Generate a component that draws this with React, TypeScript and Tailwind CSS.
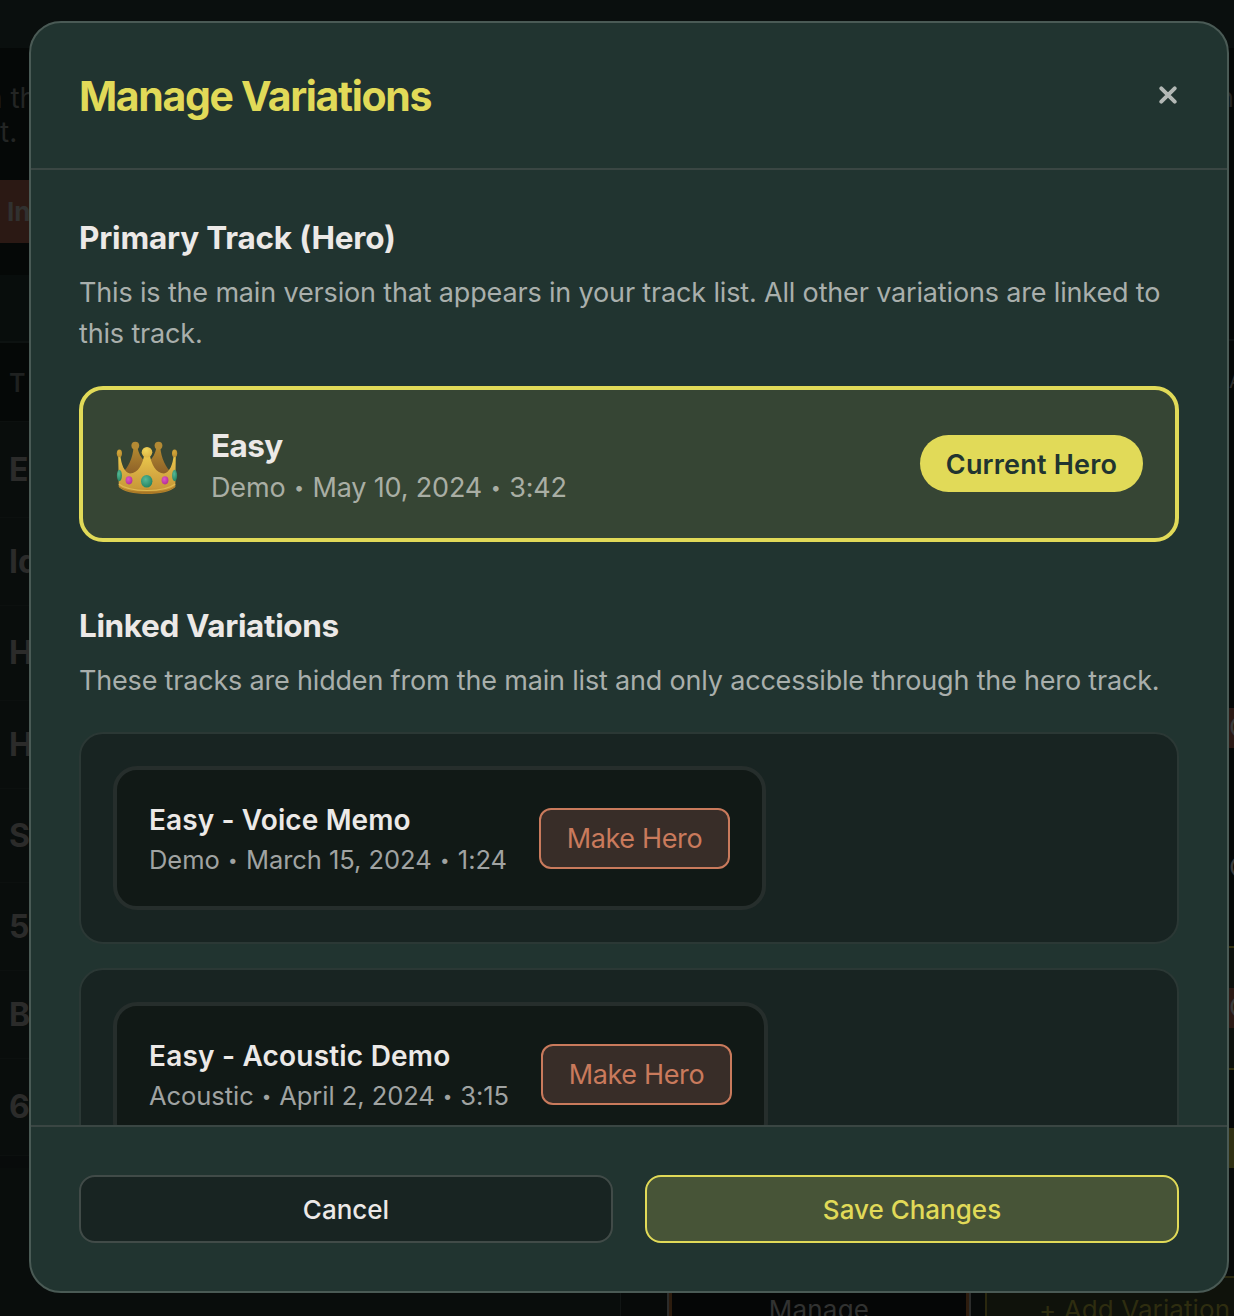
import React from 'react';

type Variation = {
  title: string;
  meta: string[];
  metaWidth: string;
  titleTracking: string;
};

const variations: Variation[] = [
  {
    title: 'Easy - Voice Memo',
    meta: ['Demo', 'March 15, 2024', '1:24'],
    metaWidth: 'w-[358px]',
    titleTracking: 'tracking-[0.12px]',
  },
  {
    title: 'Easy - Acoustic Demo',
    meta: ['Acoustic', 'April 2, 2024', '3:15'],
    metaWidth: 'w-[360px]',
    titleTracking: 'tracking-[0.2px]',
  },
];

const leftRows = [
  { label: 'E', height: 'h-[96px]' },
  { label: 'Id', height: 'h-[88px]' },
  { label: 'H', height: 'h-[95px]' },
  { label: 'H', height: 'h-[88px]' },
  { label: 'S', height: 'h-[94px]' },
  { label: '5', height: 'h-[88px]' },
  { label: 'B', height: 'h-[88px]' },
  { label: '6', height: 'h-[97px]' },
];

function Meta({ parts, dot }: { parts: string[]; dot: string }) {
  return (
    <span className="flex whitespace-pre">
      {parts.map((part, i) => (
        <React.Fragment key={part}>
          {i > 0 && <span className={dot}>•</span>}
          <span>{part}</span>
        </React.Fragment>
      ))}
    </span>
  );
}

function Crown() {
  return (
    <svg viewBox="0 0 64 56" className="h-[56px] w-[64px] shrink-0">
      <defs>
        <linearGradient id="front" x1="0" y1="0" x2="0" y2="1">
          <stop offset="0" stopColor="#ecca4c" />
          <stop offset="0.5" stopColor="#d6aa42" />
          <stop offset="0.85" stopColor="#c99a38" />
          <stop offset="1" stopColor="#a87624" />
        </linearGradient>
        <linearGradient id="back" x1="0" y1="0" x2="0" y2="1">
          <stop offset="0" stopColor="#b48a30" />
          <stop offset="1" stopColor="#8a5d28" />
        </linearGradient>
        <radialGradient id="ball" cx="0.4" cy="0.3" r="0.8">
          <stop offset="0" stopColor="#f0d65a" />
          <stop offset="1" stopColor="#d9ae40" />
        </radialGradient>
        <radialGradient id="sideBall" cx="0.4" cy="0.3" r="0.8">
          <stop offset="0" stopColor="#d4a83a" />
          <stop offset="1" stopColor="#b68a2e" />
        </radialGradient>
        <radialGradient id="green" cx="0.4" cy="0.35" r="0.7">
          <stop offset="0" stopColor="#56b996" />
          <stop offset="1" stopColor="#22805f" />
        </radialGradient>
        <radialGradient id="pink" cx="0.4" cy="0.35" r="0.7">
          <stop offset="0" stopColor="#dc58c4" />
          <stop offset="1" stopColor="#b32c94" />
        </radialGradient>
      </defs>
      <path d="M7 33 C13 28 18 18 18.500 7 L22.300 7 C23.500 13 26 18 30 21 L24 36 H14 Z" fill="url(#back)" />
      <path d="M57 33 C51 28 46 18 45.300 7 L41.500 7 C40.500 13 38 18 34 21 L40 36 H50 Z" fill="url(#back)" />
      <circle cx="20.300" cy="5.600" r="3.900" fill="#b38a34" />
      <circle cx="43.500" cy="5.600" r="3.900" fill="#b38a34" />
      <path d="M3.200 15 H5.200 C6.500 25 9 32 15 33.500 C23 33.500 28 24 29.300 14 H34.700 C36 24 41 33.500 49 33.500 C55 32 57.500 25 58.800 15 H60.800 L60.300 47 C56 51.500 45 54 32 54 C19 54 8 51.500 3.800 47 Z" fill="url(#front)" />
      <path d="M3.800 44 C10 49 20 50.500 32 50.500 C44 50.500 54 49 60.200 44" fill="none" stroke="#dfb950" strokeWidth="1.200" />
      <path d="M4.200 46.500 C11 51.500 20 52.500 32 52.500 C44 52.500 53 51.500 59.800 46.500" fill="none" stroke="#a47424" strokeWidth="0.800" />
      <ellipse cx="4.400" cy="13.300" rx="2.600" ry="3.900" fill="url(#sideBall)" />
      <ellipse cx="59.600" cy="13.300" rx="2.600" ry="3.900" fill="url(#sideBall)" />
      <circle cx="32" cy="12.300" r="5.300" fill="url(#ball)" />
      <ellipse cx="4.400" cy="35.500" rx="2.500" ry="5.700" fill="url(#green)" />
      <ellipse cx="59.600" cy="35.500" rx="2.500" ry="5.700" fill="url(#green)" />
      <ellipse cx="14" cy="40.300" rx="3.400" ry="4.100" fill="url(#pink)" />
      <ellipse cx="50" cy="40.300" rx="3.400" ry="4.100" fill="url(#pink)" />
      <ellipse cx="31.700" cy="41.300" rx="5.700" ry="6.300" fill="url(#green)" />
    </svg>
  );
}

function PageBehind() {
  return (
    <div className="flex h-[1316px] flex-col bg-[#050807]">
      <div className="h-12 shrink-0 bg-[#0a0f0e]" />
      <div className="flex h-[1120px] shrink-0 justify-between">
        <div className="flex w-1/2 flex-col whitespace-nowrap">
          <div className="flex h-[132px] flex-col items-start pt-[33px] text-[28px] leading-[34px] text-[#232524]">
            <div className="-ml-[14px]">n th</div>
            <div>t.</div>
          </div>
          <div className="flex h-[63px] items-center bg-[#2b1914] pl-[7px] text-[26px] font-bold text-[#313130]">In</div>
          <div className="h-8" />
          <div className="h-[68px] border-b-2 border-[#0d1211] bg-[#080d0c]" />
          <div className="flex h-[78px] items-center pt-1 pl-[9px] text-[25px] font-semibold text-[#1f2120]">T</div>
          {leftRows.map((row, i) => (
            <div key={i} className={`${row.height} flex items-center border-t border-[#0c100f] bg-[#090d0c] pl-[9px] text-[32px] font-bold text-[#2b2b2a]`}>
              {row.label}
            </div>
          ))}
          <div className="grow border-t border-[#0c100f] bg-[#080b0b]" />
        </div>
        <div className="w-[5px] overflow-hidden text-[27px] text-[#3a3b3a]">
          <div className="flex h-[100px] items-center justify-end text-[#242625]">n</div>
          <div className="h-[193px] border-b-2 border-[#0d1211]" />
          <div className="flex h-20 items-center text-[20px] text-[#2c2d2c]">A</div>
          <div className="h-[287px]" />
          <div className="flex h-10 items-center bg-[#2b1914]">C</div>
          <div className="h-[100px]" />
          <div className="flex h-10 items-center">C</div>
          <div className="h-[58px]" />
          <div className="h-[124px] border-y-2 border-[#33300f] bg-[#0d110d] pt-10">
            <div className="flex h-10 items-center bg-[#2b1914]">C</div>
          </div>
          <div className="h-[58px]" />
          <div className="h-10 bg-[#303012]" />
        </div>
      </div>
      <div className="flex grow overflow-hidden bg-[#070a09]">
        <div className="w-[620px] shrink-0 bg-[#090d0c]" />
        <div className="w-[47px] shrink-0 border-l border-[#111514]" />
        <div className="mt-[107px] w-[304px] shrink-0 border-x-2 border-[#2b2c2b]">
          <div className="h-full border-x-[3px] border-[#2d1c0e] bg-[#050606] pt-[18px] text-center text-[26px] leading-[34px] tracking-[0.2px] text-[#313231]">Manage</div>
        </div>
        <div className="mt-[108px] ml-[14px] h-[60px] w-[260px] shrink-0 border-2 border-[#2a280f] bg-[#0f120b] pt-[15px] pl-[52px] text-[26px] leading-[34px] tracking-[0.1px] whitespace-nowrap text-[#2e2d10]">+ Add Variation</div>
      </div>
    </div>
  );
}

export default function App() {
  return (
    <div className="relative h-[1316px] w-[1234px] overflow-hidden font-['Inter',sans-serif]">
      <PageBehind />
      <div className="absolute inset-0 pt-[21px] pl-[29px]">
        <div className="flex h-[1272px] w-[1200px] flex-col overflow-hidden rounded-[32px] border-2 border-[#4a5a55] bg-[#213430]">
          <header className="flex h-[147px] shrink-0 items-center justify-between border-b-2 border-[#3a4643] px-12">
            <h2 className="pt-0.5 text-[41px] font-[650] tracking-[-1.35px] text-[#e1da58]">Manage Variations</h2>
            <button aria-label="Close" className="mr-0.5 mb-0.5">
              <svg viewBox="0 0 18 18" className="h-[18px] w-[18px]" stroke="#b3b8b5" strokeWidth="3.900" strokeLinecap="round">
                <path d="M2.300 2.300 L15.700 15.700 M15.700 2.300 L2.300 15.700" />
              </svg>
            </button>
          </header>

          <main className="min-h-0 grow overflow-hidden px-12 pt-12">
            <section>
              <h3 className="text-[31.5px] leading-10 font-[650] tracking-[-0.2px] text-[#ece9e7]">Primary Track (Hero)</h3>
              <p className="mt-[14px] text-[27px] leading-[41px] font-[430] tracking-[-0.16px] text-[#a9afac]">
                This is the main version that appears in your track list. All other variations are linked to
                <br />
                this track.
              </p>
              <div className="mt-8 flex h-[156px] items-center rounded-3xl border-4 border-[#e1da58] bg-[#364534] px-8">
                <div className="pt-2">
                  <Crown />
                </div>
                <div className="ml-8 grow pt-1.5">
                  <div className="text-[31.5px] leading-[41px] font-[650] tracking-[-0.6px] text-[#ece9e7]">Easy</div>
                  <div className="text-[27px] leading-[43px] font-[430] tracking-[-0.16px] text-[#a9aea4]">
                    <Meta parts={['Demo', 'May 10, 2024', '3:42']} dot="w-[27px] text-center text-[18px]" />
                  </div>
                </div>
                <div className="mb-[1px] flex h-[57px] w-[223px] items-center justify-center rounded-full bg-[#e1da58] pt-[3px] text-[27px] font-[630] tracking-[0.2px] text-[#213430]">Current Hero</div>
              </div>
            </section>

            <section className="mt-16">
              <h3 className="text-[31.5px] leading-10 font-[650] tracking-[-0.37px] text-[#ece9e7]">Linked Variations</h3>
              <p className="mt-[14px] text-[27px] leading-[41px] font-[430] tracking-[-0.185px] whitespace-nowrap text-[#a9afac]">
                These tracks are hidden from the main list and only accessible through the hero track.
              </p>
              <div className="mt-[31px] flex flex-col gap-6">
                {variations.map((v) => (
                  <div key={v.title} className="flex h-[212px] rounded-3xl border-2 border-[#2b3835] bg-[#182422] p-8">
                    <div className="flex h-36 items-center gap-8 rounded-3xl border-4 border-[#262e2c] bg-[#111916] px-8">
                      <div className={`${v.metaWidth} pt-1 whitespace-nowrap`}>
                        <div className={`text-[28px] leading-10 font-[640] text-[#ece9e7] ${v.titleTracking}`}>{v.title}</div>
                        <div className="text-[25.5px] leading-10 font-[420] tracking-[-0.04px] text-[#a0a3a2]">
                          <Meta parts={v.meta} dot="w-[27px] text-center text-[17px]" />
                        </div>
                      </div>
                      <button className="h-[61px] w-[191px] rounded-xl border-2 border-[#c97a5c] bg-[#382d28] pt-0.5 text-[27px] font-[430] tracking-[-0.35px] text-[#c97a5c]">Make Hero</button>
                    </div>
                  </div>
                ))}
              </div>
            </section>
          </main>

          <footer className="grid h-[166px] shrink-0 grid-cols-2 gap-8 border-t-2 border-[#3a4643] p-12 text-[26px] font-medium">
            <button className="h-[68px] rounded-2xl border-2 border-[#414b48] bg-[#182422] text-[#ece9e7]">Cancel</button>
            <button className="h-[68px] rounded-2xl border-2 border-[#e1da58] bg-[#475437] text-[#e1da58]">Save Changes</button>
          </footer>
        </div>
      </div>
    </div>
  );
}
